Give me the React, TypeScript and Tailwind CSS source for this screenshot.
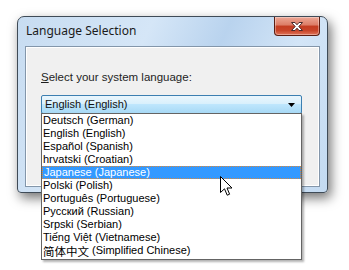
import { useState } from 'react';

const languages = [
  "Deutsch (German)",
  "English (English)",
  "Español (Spanish)",
  "hrvatski (Croatian)",
  "Japanese (Japanese)",
  "Polski (Polish)",
  "Português (Portuguese)",
  "Русский (Russian)",
  "Srpski (Serbian)",
  "Tiếng Việt (Vietnamese)",
  "简体中文 (Simplified Chinese)"
];

const CloseButton = () => (
  <div className="w-[46px] h-[19px] rounded-b-[4px] border border-t-0 border-[#5b1d12] bg-[linear-gradient(to_bottom,#eda795_0%,#dc7c66_45%,#c43d22_50%,#c84429_75%,#e0745a_100%)] flex items-center justify-center shadow-[inset_0_0_0_1px_rgba(255,255,255,0.35)]">
    <svg width="14" height="11" viewBox="0 0 14 11">
      <path d="M1.5 1.5 L5 1.5 L7 3.8 L9 1.5 L12.5 1.5 L8.8 5.5 L12.5 9.5 L9 9.5 L7 7.2 L5 9.5 L1.5 9.5 L5.2 5.5 Z" fill="#ffffff" stroke="#4a2a2a" strokeWidth="1" strokeLinejoin="round" />
    </svg>
  </div>
);

const Cursor = () => (
  <svg width="13" height="21" viewBox="0 0 13 21" className="absolute left-[178px] top-[62px]">
    <path d="M0.5 0.5 L0.5 16.5 L4.5 12.8 L7.2 19.2 L9.6 18.2 L7 12 L12 12 Z" fill="#ffffff" stroke="#000000" strokeWidth="1" strokeLinejoin="miter" />
  </svg>
);

const App = () => {
  const [selected] = useState(4);

  return (
    <div className="w-[349px] h-[270px] bg-white overflow-hidden relative font-['Liberation_Sans',Arial,sans-serif]">
      <div className="ml-[17px] mt-[16px] w-[311px] h-[177px] rounded-t-[7px] rounded-b-[4px] border border-[#3f4b57] bg-[linear-gradient(115deg,#c7dcf1_0%,#d5e6f7_35%,#b9d3ee_55%,#d3e5f7_75%,#c3daf1_100%)] shadow-[3px_5px_12px_rgba(0,0,0,0.55)] flex flex-col">
        <div className="h-[29px] flex justify-between pl-[8px] pr-[7px]">
          <div className="pt-[6px] text-[12px] text-[#1b1b1b] font-['Noto_Sans',sans-serif] leading-[16px]">Language Selection</div>
          <CloseButton />
        </div>
        <div className="mx-[7px] h-[141px] border border-[#8396aa] bg-[#f0f0f0] shadow-[inset_0_0_0_1px_#ffffff] pt-[23px] pl-[15px] pr-[17px]">
          <div className="text-[11.5px] text-[#1e1e1e] leading-[14px]">
            <span className="underline">S</span>elect your system language:
          </div>
          <div className="relative mt-[11px]">
            <div className="h-[19px] border border-[#3c7fb1] rounded-[2px] bg-[linear-gradient(to_bottom,#eaf6fd_0%,#d9f0fc_45%,#bee6fd_50%,#a7d9f5_100%)] flex items-center justify-between pl-[3px] pr-[6px]">
              <span className="text-[11px] text-[#111] leading-[13px]">English (English)</span>
              <svg width="7" height="4" viewBox="0 0 7 4">
                <path d="M0 0 L7 0 L3.5 4 Z" fill="#000" />
              </svg>
            </div>
            <div className="absolute left-0 right-0 top-[18px] h-[147px] border border-[#646464] bg-white shadow-[2px_2px_2px_rgba(0,0,0,0.3)] z-10">
              {languages.map((lang, i) => (
                <div
                  key={lang}
                  className={
                    i === selected
                      ? "h-[13px] pl-[1px] text-[11px] leading-[11px] text-white bg-[#3399ff] border border-dotted border-[#d9883a]"
                      : "h-[13px] pl-[1px] text-[11px] leading-[13px] text-black flex items-center whitespace-nowrap"
                  }
                >
                  {i === 10 ? (
                    <>
                      <span className="text-[11.5px] leading-[12px] font-['Noto_Sans_CJK_SC',sans-serif]">简体中文</span>
                      <span className="ml-[3px]">(Simplified Chinese)</span>
                    </>
                  ) : (
                    lang
                  )}
                </div>
              ))}
              <Cursor />
            </div>
          </div>
        </div>
      </div>
    </div>
  );
};

export default App;
